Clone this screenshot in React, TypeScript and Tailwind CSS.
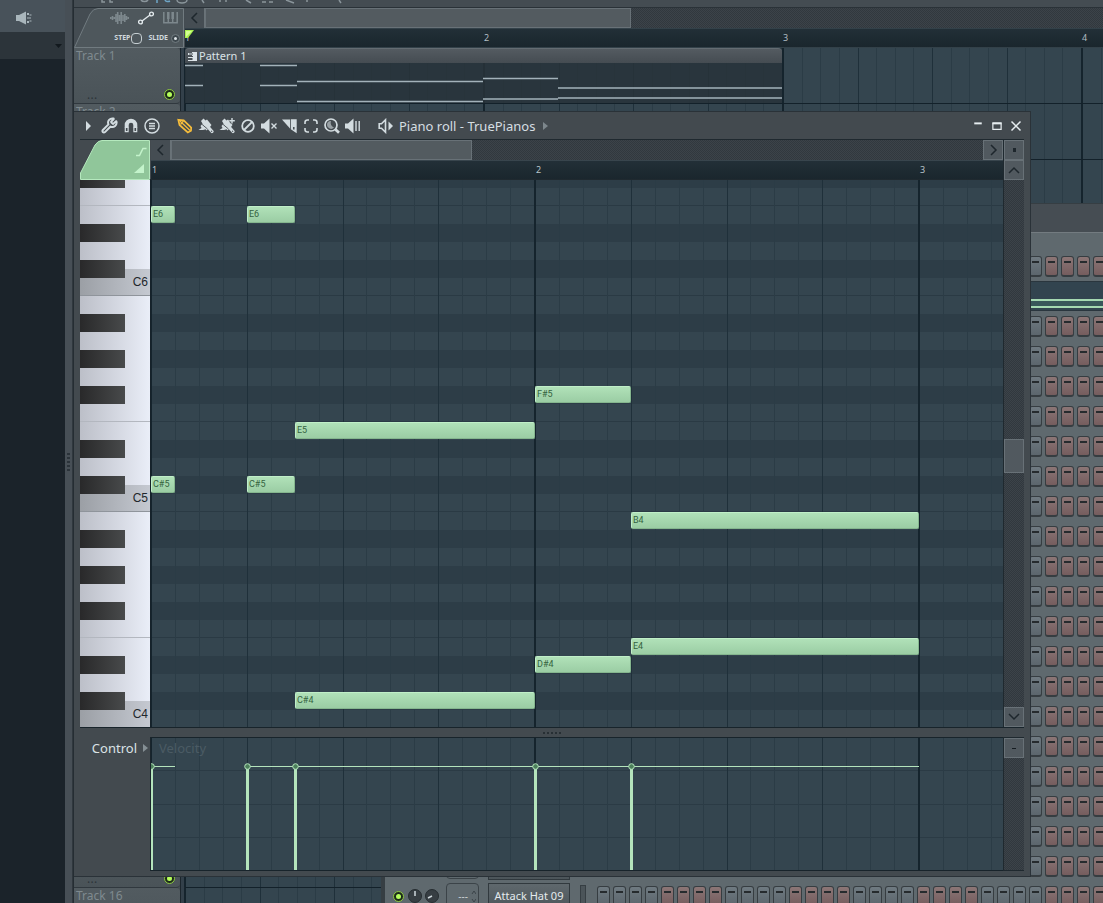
import type { ReactNode } from 'react';
import { Wrench } from 'lucide-react';

const STEP = 24;
const ROW = 18;
// the topmost row is cut by the ruler, 10px of it are scrolled out
const SCROLL_TOP = 10;
const NAMES = ['C', 'C#', 'D', 'D#', 'E', 'F', 'F#', 'G', 'G#', 'A', 'A#', 'B'];

interface Note {
  name: string;
  start: number;
  length: number;
}

const notes: Note[] = [
  { name: 'E6', start: 0, length: 1 },
  { name: 'C#5', start: 0, length: 1 },
  { name: 'E6', start: 4, length: 2 },
  { name: 'C#5', start: 4, length: 2 },
  { name: 'E5', start: 6, length: 10 },
  { name: 'C#4', start: 6, length: 10 },
  { name: 'F#5', start: 16, length: 4 },
  { name: 'D#4', start: 16, length: 4 },
  { name: 'B4', start: 20, length: 12 },
  { name: 'E4', start: 20, length: 12 },
];

// F#6 down to C4
const keys: string[] = [];
for (let i = 78; i >= 48; i--) {
  keys.push(NAMES[i % 12] + Math.floor(i / 12));
}

const tracks = Array.from({ length: 16 }, (_, i) => `Track ${i + 1}`);
const channels = Array.from({ length: 22 }, (_, i) => i);
const steps = Array.from({ length: 32 }, (_, i) => i);

const dither =
  'bg-[repeating-conic-gradient(#31383e_0_25%,#3c4349_0_50%)] [background-size:2px_2px]';
const scrollButton =
  'flex h-5 w-5 shrink-0 items-center justify-center border border-[#687177] bg-[#51595f] text-[#1e272d]';

function Icon({ children, size = 16 }: { children: ReactNode; size?: number }) {
  return (
    <svg width={size} height={size} viewBox="0 0 16 16" fill="none" stroke="currentColor" strokeWidth="1.6">
      {children}
    </svg>
  );
}

function Tool({ label, children, color = 'text-[#d3dce0]' }: { label: string; children: ReactNode; color?: string }) {
  return (
    <button aria-label={label} className={`flex h-7 w-[21px] shrink-0 items-center justify-center ${color}`}>
      {children}
    </button>
  );
}

function Chevron({ d }: { d: string }) {
  return (
    <svg width="12" height="12" viewBox="0 0 12 12" fill="none" stroke="currentColor" strokeWidth="1.5">
      <path d={d} />
    </svg>
  );
}

function Brush() {
  return (
    <>
      <path d="M3 3l2.500-2.500L7.500 2.500 9 1.500l4.500 5.500-1.500 2-3.500 3.500z" fill="currentColor" stroke="none" />
      <path d="M.5 12l3-2L2.500 8 4.500 5.500 9 11 5 12z" fill="currentColor" stroke="none" />
      <path d="M10.500 9.500l3.500 4" strokeWidth="3.200" strokeLinecap="round" />
      <path d="M3 5.500L9.500 11" stroke="#434a4f" strokeWidth=".9" />
      <path d="M13.200 12.800l.8.9" stroke="#434a4f" strokeWidth="1.200" />
    </>
  );
}

function Bars({ count, width }: { count: number; width: string }) {
  return (
    <div className="absolute inset-y-0 -left-px right-0 flex overflow-hidden">
      {Array.from({ length: count }, (_, bar) => (
        <div key={bar} className={`flex shrink-0 ${width}`}>
          {[0, 1, 2, 3].map((beat) => (
            <div
              key={beat}
              className={`flex flex-1 ${beat === 0 ? 'border-l-2 border-[#15242d]' : 'border-l border-[#1f303a]'}`}
            >
              <div className="flex-1" />
              <div className="flex-1 border-l border-[#2b3c46]" />
              <div className="flex-1 border-l border-[#2b3c46]" />
              <div className="flex-1 border-l border-[#2b3c46]" />
            </div>
          ))}
        </div>
      ))}
    </div>
  );
}

function Led() {
  return (
    <span className="flex h-[11px] w-[11px] shrink-0 items-center justify-center rounded-full border border-[#8fc944] bg-[#1c2a1a]">
      <span className="h-[5px] w-[5px] rounded-full bg-[#b6ff5c]" />
    </span>
  );
}

function BrowserPanel() {
  return (
    <aside className="flex w-[65px] shrink-0 flex-col bg-[#1b232a]">
      <div className="flex h-8 items-center bg-[#48525a] pl-4">
        <button aria-label="Preview sound" className="mt-1 text-[#a9b6bc]">
          <svg width="16" height="14" viewBox="0 0 16 14" fill="currentColor">
            <path d="M0 4h3l7-3.500v13L3 10H0z" />
            <path d="M11 2h2v2h-2zM11 6.500h4v1h-4zM11 10h2v2h-2zM13.500 3.500h2v1h-2zM13.500 9.500h2v1h-2z" />
          </svg>
        </button>
      </div>
      <button aria-label="Browser menu" className="flex h-[27px] items-center justify-end bg-[#2c343a] pr-[3px] text-[#12191e]">
        <svg width="7" height="4" viewBox="0 0 7 4" fill="currentColor">
          <path d="M0 0h7L3.500 4z" />
        </svg>
      </button>
    </aside>
  );
}

function PlaylistHeader() {
  return (
    <div className="relative h-10 w-[111px] shrink-0">
      <svg className="absolute inset-0" width="111" height="40" viewBox="0 0 111 40">
        <path d="M.5 39.500L16 6Q19 .5 24 .5H109.500V39.500z" fill="#4e575c" stroke="#717b80" />
      </svg>
      <div className="relative flex h-5 items-center justify-end gap-[9px] pr-[7px]">
        <button aria-label="Audio clips" className="text-[#7d888d]">
          <svg width="19" height="14" viewBox="0 0 19 14" stroke="currentColor" strokeWidth="1.600">
            <path d="M.7 6v2M2.500 5v4M4.300 6v2M6 3v8M7.700 1v12M9.500 4v6M11.200 1v12M13 4v6M14.800 3v8M16.500 5v4M18.300 6v2" />
          </svg>
        </button>
        <button aria-label="Automation clips" className="text-[#e3eaed]">
          <svg width="16" height="14" viewBox="0 0 16 14" fill="none" stroke="currentColor" strokeWidth="1.400">
            <circle cx="2.500" cy="11" r="1.900" />
            <circle cx="13.500" cy="3" r="1.900" />
            <path d="M4 10L12 4" />
          </svg>
        </button>
        <button aria-label="Pattern clips" className="text-[#7d888d]">
          <svg width="15" height="12" viewBox="0 0 15 12" fill="none" stroke="currentColor" strokeWidth="1.500">
            <path d="M.8 0v10.800h13.400V0M5.300 0v7M9.700 0v7M5.300 7v4M9.700 7v4" />
            <path d="M5.300 0v7M9.700 0v7" strokeWidth="2.500" />
          </svg>
        </button>
      </div>
      <div className="relative flex h-5 items-center justify-end pr-[5px] text-[7px] font-bold text-[#d0d8dc]">
        <label htmlFor="step">STEP</label>
        <input id="step" type="checkbox" className="ml-px h-[11px] w-[11px] appearance-none rounded border border-[#c5ced2]" />
        <label htmlFor="slide" className="ml-[6px]">SLIDE</label>
        <span className="relative ml-[3px] flex h-[9px] w-[9px] items-center justify-center">
          <input id="slide" type="checkbox" defaultChecked className="h-[9px] w-[9px] appearance-none rounded-full border border-[#727c81] bg-[#3d474d]" />
          <span className="absolute h-[3px] w-[3px] rounded-full bg-[#dde4e7]" />
        </span>
      </div>
    </div>
  );
}

function PatternClip() {
  return (
    <div className="absolute left-0 top-0 h-[55px] w-[597px] bg-[#28333a]/85">
      <div className="flex h-[15px] items-center rounded-t-sm border-t border-[#646c72] bg-linear-to-b from-[#545b61] to-[#454c52] pl-[3px] text-[11px] text-[#dbe3e7]">
        <svg width="9" height="9" viewBox="0 0 9 9" fill="currentColor">
          <path d="M0 0h9v9H0V8h4V6H0V5h4V3H0V1h4V0z" />
          <path d="M1 2h4M1 4.500h4M1 7h4" stroke="#474e54" />
        </svg>
        <span className="ml-[2px]">Pattern 1</span>
      </div>
      <svg className="absolute inset-0" width="597" height="55" viewBox="0 0 597 55">
        <g stroke="#a3b2ba" strokeWidth="1.500">
          <path d="M0 17.500H18M75 17.500H112M0 37.500H18M75 37.500H112" />
          <path d="M112 33.500H298M112 53.500H298M298 30.500H373M298 51H373" />
          <path d="M373 40H597M373 50H597" />
        </g>
      </svg>
    </div>
  );
}

function Playlist() {
  return (
    <section aria-label="Playlist" className="absolute inset-0 flex flex-col overflow-hidden border-l border-[#252d33] bg-[#444c52]">
      <div className="h-2 shrink-0 border-b border-[#2a3238] text-[#8a959b]">
        <svg width="320" height="4" viewBox="0 0 320 4" fill="none" stroke="currentColor" strokeWidth="1.500">
          <path d="M28 0v2h3M36 0v2h3M67 0a4 3 0 0 0 7 0M103 0a5 3 0 0 0 10 0M128 0l2 3M146 0v2M152 0v2M172 0l5 3M188 2h4M195 2h4M212 0l8 3M233 0v2M265 0l2 3" />
          <path d="M83 0v3M91 0a3 2 0 0 0 5 1" stroke="#6ea6c8" />
        </svg>
      </div>
      <div className="flex h-10 shrink-0">
        <PlaylistHeader />
        <div className="flex min-w-0 flex-1 flex-col">
          <div className={`flex h-5 ${dither}`}>
            <button aria-label="Scroll left" className="flex h-5 w-5 shrink-0 items-center justify-center border-r border-[#6a7378] bg-[#454d53] text-[#1e272d]">
              <Chevron d="M8 1L3 6l5 5" />
            </button>
            <div className="w-[426px] border border-[#687177] bg-[#535b60]" />
          </div>
          <div className="relative flex h-5 items-center overflow-hidden border-y border-[#334149] bg-linear-to-b from-[#222f37] to-[#1a262d] text-[9px] text-[#b3bec4]">
            <svg className="absolute left-0 top-px" width="9" height="10" viewBox="0 0 9 10">
              <path d="M0 0h9L3 8H0z" fill="#a8f050" />
              <path d="M1 1h6L1 7z" fill="#d4ff94" />
            </svg>
            {[1, 2, 3, 4].map((bar) => (
              <span key={bar} className="w-[299px] shrink-0">{bar}</span>
            ))}
          </div>
        </div>
      </div>
      {tracks.map((track, i) => (
        <div key={track} className="flex h-14 shrink-0">
          <div className="relative w-[106px] shrink-0 rounded-r border-b border-[#30383e] bg-linear-to-b from-[#525b60] to-[#4a5358] pl-[2px] text-xs text-[#7f8a8f]">
            {track}
            {i < 15 && (
              <>
                <span className="absolute bottom-[2px] left-[13px] leading-3 tracking-wide text-[#2d353a]">...</span>
                <span className="absolute bottom-[3px] right-[5px] flex"><Led /></span>
              </>
            )}
          </div>
          <div className="w-[5px] shrink-0 border-x border-[#1c262d] bg-[#33404a]" />
          <div className="relative min-w-0 flex-1 border-b border-[#13212a] bg-[#34454f]">
            <Bars count={6} width="w-[299px]" />
            {i === 0 && <PatternClip />}
          </div>
        </div>
      ))}
    </section>
  );
}

function Knob({ label, d }: { label: string; d: string }) {
  return (
    <button aria-label={label} className="h-[14px] w-[14px] shrink-0">
      <svg width="14" height="14" viewBox="0 0 14 14">
        <circle cx="7" cy="7" r="6.500" fill="#373e43" stroke="#262d31" />
        <path d={d} stroke="#cfd8dc" strokeWidth="1.500" />
      </svg>
    </button>
  );
}

function ChannelRow({ index }: { index: number }) {
  const name = index === 21 ? 'Attack Hat 09' : '';

  return (
    <div className="flex h-[30px] shrink-0 items-center pl-2">
      <Led />
      <span className="ml-1 flex"><Knob label="Pan" d="M7 2v5" /></span>
      <span className="ml-[3px] flex"><Knob label="Volume" d="M3 9l4-2" /></span>
      <div className="ml-[7px] flex h-[26px] w-[33px] shrink-0 items-center justify-end gap-[3px] rounded border border-[#3b4348] pr-[2px] text-[10px] text-[#c8d1d5]">
        {name && <span>---</span>}
        <svg width="5" height="14" viewBox="0 0 5 14" fill="none" stroke="#3b4348">
          <path d="M1 5l2-3 2 3M1 10l2 3 2-3" />
        </svg>
      </div>
      <button
        aria-label={name || `Channel ${index + 1}`}
        className="ml-[9px] h-[27px] w-[82px] shrink-0 border border-[#31393e] bg-linear-to-b from-[#5f686d] to-[#4c555a] text-[11px] text-[#e4eaed]"
      >
        {name}
      </button>
      <div className="ml-[10px] h-[22px] w-[6px] shrink-0 border border-[#363e43] bg-[#4b5459]" />
      {index === 1 ? (
        <div className="ml-[11px] h-full flex-1 border-y border-[#2a363e] bg-[#32444f] pt-[17px]">
          <div className="h-[9px] border-y-2 border-[#a5d9b2] bg-[#38575a]" />
        </div>
      ) : (
        <div className="ml-[11px] flex gap-[3px]">
          {steps.map((step) => (
            <button
              key={step}
              aria-label={`Step ${step + 1}`}
              className={`flex h-[21px] w-[13px] shrink-0 justify-center rounded-[3px] border border-b-2 border-[#363d41] pt-[4px] ${
                Math.floor(step / 4) % 2 === 1
                  ? 'bg-linear-to-b from-[#8c7676] to-[#755d5e]'
                  : 'bg-linear-to-b from-[#6f7a81] to-[#5c666d]'
              }`}
            >
              <span className="h-[2px] w-[7px] bg-[#262b2e]" />
            </button>
          ))}
        </div>
      )}
    </div>
  );
}

function ChannelRack() {
  return (
    <section
      aria-label="Channel rack"
      className="absolute bottom-0 left-[308px] right-0 top-[203px] flex flex-col overflow-hidden border-l-4 border-t border-[#363e43] bg-[#5f696e]"
    >
      <div className="h-[29px] shrink-0 border-b border-[#737b80] bg-[#464d53]" />
      <div className="h-[18px] shrink-0" />
      {channels.map((index) => (
        <ChannelRow key={index} index={index} />
      ))}
    </section>
  );
}

function TitleBar() {
  return (
    <div className="flex h-[27px] shrink-0 items-center pl-[4px] pr-[5px]">
      <Tool label="Piano roll options">
        <svg width="5" height="10" viewBox="0 0 5 10" fill="currentColor"><path d="M0 0l5 5-5 5z" /></svg>
      </Tool>
      <Tool label="Tools"><Wrench size={17} strokeWidth={2.800} /></Tool>
      <Tool label="Snap">
        <Icon>
          <path d="M3.700 10V7a4.300 4.300 0 0 1 8.600 0v3" strokeWidth="4" />
          <path d="M2.300 9.500v4.200h2.800V9.500M10.900 9.500v4.200h2.800V9.500" strokeWidth="1.200" />
        </Icon>
      </Tool>
      <Tool label="Stamp">
        <Icon>
          <circle cx="8" cy="8" r="7" strokeWidth="1.500" />
          <path d="M5 5.500h6M5 8h6M5 10.500h6" strokeWidth="1.300" />
        </Icon>
      </Tool>
      <div className="ml-[12px] flex">
        <Tool label="Draw" color="text-[#f6bd3c]">
          <Icon>
            <path d="M1.300 1.800l5.400.6 7.500 7.200-.2 3.200-3.200 1.700L2.500 7z" strokeWidth="1.700" />
            <path d="M2 2l2.500 2.500M4.500 4.500l8.500 8M3.500 6.500l3-3.500" strokeWidth="1.200" />
          </Icon>
        </Tool>
        <Tool label="Paint">
          <Icon><Brush /></Icon>
        </Tool>
        <Tool label="Paint drum sequence">
          <Icon>
            <Brush />
            <path d="M13 0v5.500M10.300 2.700h5.500" stroke="#434a4f" strokeWidth="3" />
            <path d="M13 0v5.500M10.300 2.700h5.500" strokeWidth="1.400" />
          </Icon>
        </Tool>
        <Tool label="Delete">
          <Icon>
            <circle cx="8" cy="8" r="5.800" strokeWidth="1.800" />
            <path d="M12 4l-8 8" strokeWidth="1.800" />
          </Icon>
        </Tool>
        <Tool label="Mute">
          <Icon>
            <path d="M0 5.500h3L8.500 .5v15L3 10.500H0z" fill="currentColor" stroke="none" />
            <path d="M10.500 5.500l5 5M15.500 5.500l-5 5" strokeWidth="1.400" />
          </Icon>
        </Tool>
        <Tool label="Slice">
          <Icon>
            <path d="M0 1.500h8v9z" fill="currentColor" stroke="none" />
            <path d="M9.500 2H14v12l-4.500-3z" fill="currentColor" stroke="currentColor" strokeWidth="1.400" />
            <path d="M11.800 9v2.500" stroke="#434a4f" strokeWidth="1.500" />
          </Icon>
        </Tool>
        <Tool label="Select">
          <Icon>
            <path d="M2 6V4.500A2.500 2.500 0 0 1 4.500 2H6M10 2h1.500A2.500 2.500 0 0 1 14 4.500V6M14 10v1.500a2.500 2.500 0 0 1-2.500 2.500H10M6 14H4.500A2.500 2.500 0 0 1 2 11.500V10" />
          </Icon>
        </Tool>
        <Tool label="Zoom">
          <Icon>
            <circle cx="7" cy="7" r="6" strokeWidth="1.700" />
            <path d="M3 7a4 4 0 0 1 4-4 5 5 0 0 0 3 6.500A4 4 0 0 1 3 7z" fill="currentColor" stroke="none" opacity=".6" />
            <path d="M11.500 11.500l3.500 3.200" strokeWidth="2.800" />
          </Icon>
        </Tool>
        <Tool label="Playback">
          <Icon>
            <path d="M0 5.500h3L8.500 .5v15L3 10.500H0z" fill="currentColor" stroke="none" />
            <path d="M11 3v10M14.200 3v10" strokeWidth="1.400" />
          </Icon>
        </Tool>
      </div>
      <div className="ml-[12px] flex items-center">
        <Tool label="Target channel">
          <Icon>
            <path d="M1.200 5.800h2.300L7.500 1.800v12.400l-4-4H1.200z" />
            <path d="M10.500 3.500L15 8l-4.500 4.500z" fill="currentColor" stroke="none" />
          </Icon>
        </Tool>
        <h1 className="ml-[3px] whitespace-nowrap text-[13px] leading-5 text-[#d6dee2]">Piano roll - TruePianos</h1>
        <svg className="ml-[8px]" width="5" height="8" viewBox="0 0 5 8" fill="#7d878c"><path d="M0 0l5 4-5 4z" /></svg>
      </div>
      <div className="ml-auto flex text-[#e6edf0]">
        <button aria-label="Minimize" className="flex h-7 w-[19px] items-center justify-center">
          <Icon size={12}><path d="M3 4.500h10" strokeWidth="2.600" /></Icon>
        </button>
        <button aria-label="Maximize" className="flex h-7 w-[19px] items-center justify-center">
          <Icon size={12}>
            <path d="M2.500 4h11v8.500h-11z" strokeWidth="1.600" />
            <path d="M2 4.500h12" strokeWidth="2.600" />
          </Icon>
        </button>
        <button aria-label="Close" className="flex h-7 w-[19px] items-center justify-center">
          <Icon size={12}><path d="M2 2l12 12M14 2L2 14" strokeWidth="2" /></Icon>
        </button>
      </div>
    </div>
  );
}

function RollHeader() {
  return (
    <div className="flex h-[41px] shrink-0 border-y border-[#1f292f]">
      <div className="relative w-[71px] shrink-0">
        <svg className="absolute inset-0" width="70" height="40" viewBox="0 0 70 40">
          <path d="M.5 39.500V33L15 5Q18 .5 22 .5H69.500V39.500z" fill="#90c69a" stroke="#b5e9be" />
          <path d="M56 15.500h3.500l3.500-7h3.500" fill="none" stroke="#c3f3cb" strokeWidth="1.500" />
          <path d="M54 33h10V24z" fill="#c3f3cb" />
        </svg>
      </div>
      <div className="flex min-w-0 flex-1 flex-col">
        <div className={`flex h-5 ${dither}`}>
          <button aria-label="Scroll left" className="flex h-5 w-5 shrink-0 items-center justify-center border-r border-[#6a7378] bg-[#454d53] text-[#1e272d]">
            <Chevron d="M8 1L3 6l5 5" />
          </button>
          <div className="w-[301px] border border-[#687177] bg-[#535b60]" />
          <button aria-label="Scroll right" className={`ml-auto ${scrollButton}`}>
            <Chevron d="M4 1l5 5-5 5" />
          </button>
        </div>
        <div className="flex h-5 items-center overflow-hidden border-t border-[#38454d] bg-linear-to-b from-[#222f37] to-[#1a262d] text-[9px] text-[#b9c4ca]">
          {[1, 2, 3].map((bar) => (
            <span key={bar} className="w-[384px] shrink-0 pl-px">{bar}</span>
          ))}
        </div>
      </div>
      <div className="flex w-[21px] shrink-0 flex-col border-l border-[#1f292f]">
        <button aria-label="Scroll lock" className={scrollButton}>
          <span className="h-1 w-[3px] bg-[#1e272d]" />
        </button>
        <button aria-label="Scroll up" className={scrollButton}>
          <Chevron d="M1 9l5-5 5 5" />
        </button>
      </div>
    </div>
  );
}

function PianoKey({ name }: { name: string }) {
  if (name.includes('#')) {
    return (
      <div className="relative z-10 h-[18px] shrink-0">
        <div className="h-full w-[45px] bg-linear-to-r from-[#29292a] to-[#484a4b]" />
      </div>
    );
  }

  // a C key reaches up beside the lower half of its C#
  if (name.startsWith('C')) {
    return (
      <div className="-mt-[9px] flex h-[27px] shrink-0 items-center justify-end border-b border-[#8f949b] bg-linear-to-r from-[#9b9fa5] to-[#c5c9d1] pr-[2px] font-['Liberation_Sans',sans-serif] text-xs text-[#22272c]">
        {name}
      </div>
    );
  }

  return <div className={`h-[18px] shrink-0 ${name.startsWith('F') ? 'border-b border-[#b3b7bf]' : ''}`} />;
}

function Keyboard() {
  return (
    <div className="w-[70px] shrink-0 overflow-hidden bg-linear-to-r from-[#bcbfc8] to-[#eaeef8]">
      <div className="-mt-[10px] flex flex-col">
        {keys.map((key) => (
          <PianoKey key={key} name={key} />
        ))}
      </div>
    </div>
  );
}

function NoteGrid() {
  return (
    <div className="relative min-w-0 flex-1 overflow-hidden bg-[#34454f]">
      <div className="-mt-[10px] flex flex-col">
        {keys.map((key) => (
          <div
            key={key}
            className={`h-[18px] shrink-0 ${key.includes('#') ? 'bg-[#2d3d47]' : ''} ${
              /^[CF]\d/.test(key) ? 'border-b border-[#2a3a44]' : ''
            }`}
          />
        ))}
      </div>
      <Bars count={5} width="w-[384px]" />
      {notes.map((note) => (
        <button
          key={`${note.name}-${note.start}`}
          className="absolute flex h-[17px] items-center overflow-hidden rounded-[2px] border border-[#c0efc8] border-b-[#85b68e] border-r-[#85b68e] bg-linear-to-b from-[#b0e1b8] to-[#9bcda4] pl-px font-['Roboto',sans-serif] text-[9px] text-[#35633f]"
          style={{
            left: note.start * STEP,
            top: keys.indexOf(note.name) * ROW - SCROLL_TOP,
            width: note.length * STEP,
          }}
        >
          {note.name}
        </button>
      ))}
    </div>
  );
}

function ControlLane() {
  const starts = [...new Set(notes.map((note) => note.start))];

  return (
    <div className="flex h-[134px] shrink-0">
      <div className="flex w-[71px] shrink-0 items-start justify-end border-r border-[#1a252c] pr-[2px]">
        <button className="flex items-center gap-[6px] text-[13px] leading-[22px] text-[#dbe2e6]">
          Control
          <svg width="5" height="8" viewBox="0 0 5 8" fill="#858f94"><path d="M0 0l5 4-5 4z" /></svg>
        </button>
      </div>
      <div className="relative min-w-0 flex-1 overflow-hidden border-y border-[#18242b] bg-[#34454f]">
        <div className="absolute inset-0 flex flex-col">
          <div className="flex-1 border-b border-[#2b3b45]" />
          <div className="flex-1 border-b border-[#2b3b45]" />
          <div className="flex-1 border-b border-[#2b3b45]" />
          <div className="flex-1" />
        </div>
        <Bars count={5} width="w-[384px]" />
        <span className="absolute left-2 top-0 text-[13px] leading-5 text-[#4b5b64]">Velocity</span>
        <svg className="absolute inset-0 h-full w-full" stroke="#b4e4bc">
          <path d={`M0 28.500H${STEP}M${4 * STEP} 28.500H${32 * STEP}`} />
          {starts.map((start) => (
            <g key={start}>
              <line x1={start * STEP + 0.5} x2={start * STEP + 0.5} y1="29" y2="100%" strokeWidth="3" />
              <circle cx={start * STEP + 0.5} cy="28.500" r="2.800" fill="#4c7f5b" />
            </g>
          ))}
        </svg>
      </div>
      <div className={`flex w-[21px] shrink-0 flex-col border border-r-0 border-[#1f292f] ${dither}`}>
        <button aria-label="Collapse lane" className={scrollButton}>
          <span className="h-px w-1 bg-[#151c21]" />
        </button>
      </div>
    </div>
  );
}

function PianoRoll() {
  return (
    <section
      aria-label="Piano roll"
      className="absolute bottom-[26px] left-px right-[72px] top-[111px] flex flex-col border-y border-r border-[#2a3238] bg-[#434a4f]"
    >
      <TitleBar />
      <div className="flex min-h-0 flex-1 flex-col pb-[5px] pl-[6px] pr-[6px]">
        <RollHeader />
        <div className="flex min-h-0 flex-1 border-b border-[#18242b]">
          <Keyboard />
          <div className="w-px shrink-0 bg-[#16222a]" />
          <NoteGrid />
          <div className={`flex w-[21px] shrink-0 flex-col border-l border-[#1f292f] ${dither}`}>
            <div className="grow-[260]" />
            <div className="h-[34px] border border-[#687177] bg-[#51595f]" />
            <div className="grow-[234]" />
            <button aria-label="Scroll down" className={scrollButton}>
              <Chevron d="M1 3l5 5 5-5" />
            </button>
          </div>
        </div>
        <div className="flex h-[9px] shrink-0 items-center justify-center gap-[2px]">
          {[0, 1, 2, 3, 4].map((dot) => (
            <span key={dot} className="h-[2px] w-[2px] bg-[#272f34]" />
          ))}
        </div>
        <ControlLane />
      </div>
    </section>
  );
}

export default function App() {
  return (
    <div className="flex h-screen w-full overflow-hidden bg-[#444c52] font-['Noto_Sans',sans-serif]">
      <BrowserPanel />
      <div className="flex w-2 shrink-0 flex-col items-center justify-center gap-[2px] border-r border-[#30383e] bg-[#474f56] pt-5">
        {[0, 1, 2, 3, 4].map((dot) => (
          <span key={dot} className="h-[2px] w-[3px] bg-[#2b333a]" />
        ))}
      </div>
      <main className="relative min-w-0 flex-1">
        <Playlist />
        <ChannelRack />
        <PianoRoll />
      </main>
    </div>
  );
}
